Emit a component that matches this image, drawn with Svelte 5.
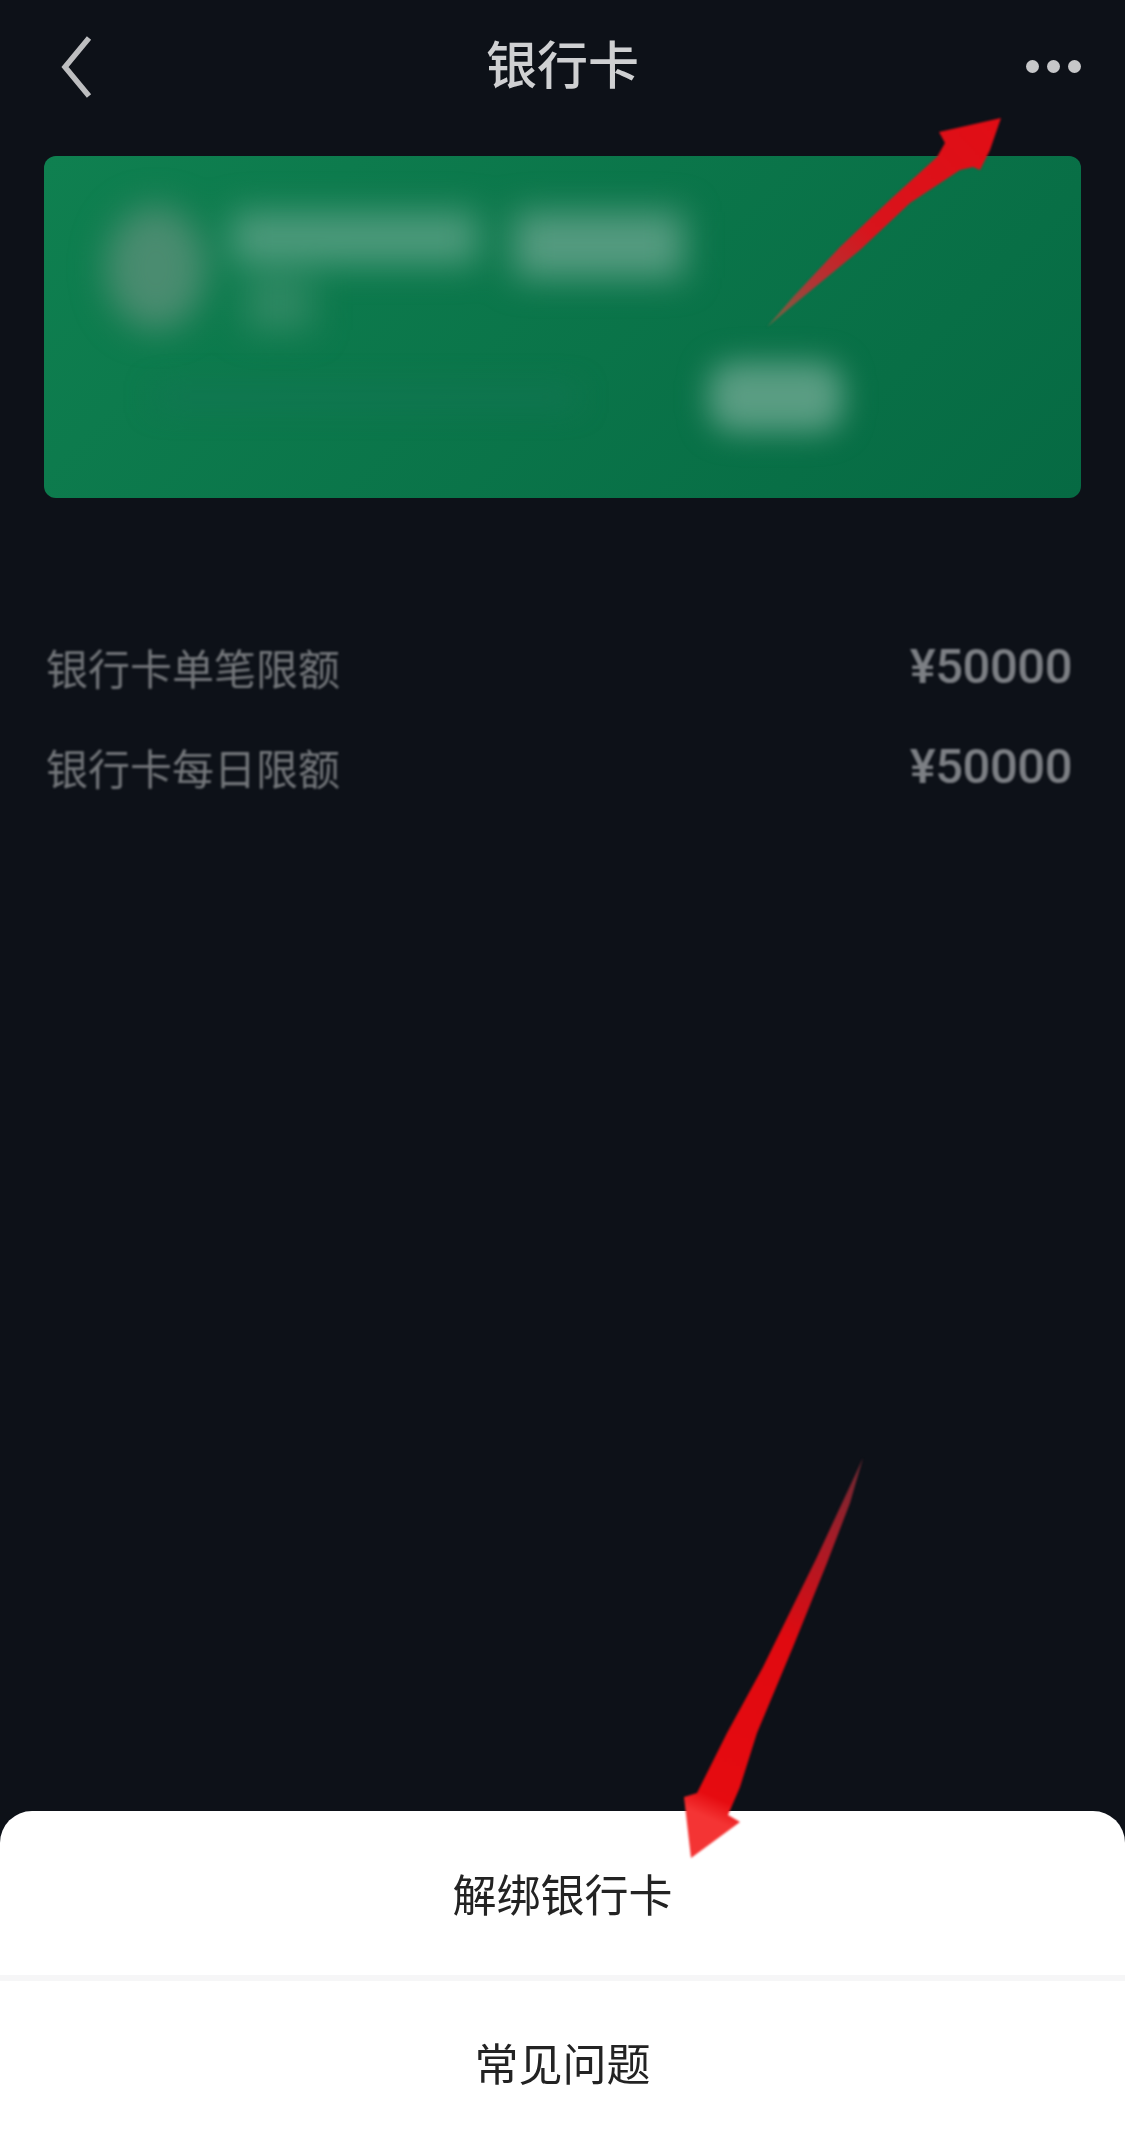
<script>
  const limits = [
    { label: "银行卡单笔限额", value: "¥50000" },
    { label: "银行卡每日限额", value: "¥50000" },
  ];
</script>

<div class="page">
  <header class="nav">
    <svg class="back" viewBox="0 0 40 64" width="40" height="64" aria-hidden="true">
      <path d="M32 3 L8 32 L32 61" fill="none" stroke="#bdbec0" stroke-width="5.5" />
    </svg>
    <h1>银行卡</h1>
    <div class="more" aria-hidden="true"><i></i><i></i><i></i></div>
  </header>

  <section class="card">
    <div class="card-top">
      <div class="logo"></div>
      <div class="name">
        <div class="name-row"><span class="bar one"></span><span class="bar two"></span></div>
        <span class="bar sub"></span>
      </div>
    </div>
    <div class="card-bottom">
      <span class="faint"></span>
      <span class="blob"></span>
    </div>
  </section>

  <section class="limits">
    {#each limits as row}
      <div class="row">
        <span>{row.label}</span>
        <span class="value">{row.value}</span>
      </div>
    {/each}
  </section>

  <section class="sheet">
    <div class="action first">解绑银行卡</div>
    <div class="action second">常见问题</div>
  </section>

  <!-- red annotation arrows drawn on top of the screenshot -->
  <svg class="arrows" viewBox="0 0 1125 2143" width="1125" height="2143" aria-hidden="true">
    <defs>
      <linearGradient id="up" x1="767" y1="327" x2="1001" y2="118" gradientUnits="userSpaceOnUse">
        <stop offset="0" stop-color="#6a6a45" />
        <stop offset="0.2" stop-color="#b03535" />
        <stop offset="0.45" stop-color="#d8141c" />
        <stop offset="1" stop-color="#e20d15" />
      </linearGradient>
      <linearGradient id="down" x1="863" y1="1458" x2="691" y2="1858" gradientUnits="userSpaceOnUse">
        <stop offset="0" stop-color="#6b2a33" />
        <stop offset="0.2" stop-color="#a51c28" />
        <stop offset="0.45" stop-color="#e00a10" />
        <stop offset="0.85" stop-color="#e60b10" />
        <stop offset="0.9" stop-color="#f43434" />
        <stop offset="1" stop-color="#f43434" />
      </linearGradient>
    </defs>
    <polygon points="767,327 793,297 840,247 893,197 937,157 945,143 939,132 1001,118 990,150 980,170 973,167 960,170 910,203 860,250 803,297" fill="url(#up)" />
    <polygon points="863,1458 850,1503 827,1563 793,1647 757,1733 740,1787 728,1815 740,1822 691,1858 684,1797 697,1793 727,1733 763,1667 817,1557" fill="url(#down)" />
  </svg>
</div>

<style>
  :global(body) {
    margin: 0;
    background: #0d1118;
  }

  .page {
    position: relative;
    display: flex;
    flex-direction: column;
    width: 1125px;
    height: 2143px;
    overflow: hidden;
    background: #0d1118;
    font-family: "Noto Sans CJK SC", "Liberation Sans", sans-serif;
  }

  .nav {
    display: flex;
    align-items: center;
    justify-content: center;
    position: relative;
    height: 124px;
    margin-bottom: 32px;
  }

  .back {
    position: absolute;
    left: 57px;
    top: 35px;
  }

  h1 {
    margin: 0;
    font-size: 51px;
    font-weight: 500;
    color: #cfd0d2;
    filter: blur(0.7px);
  }

  .more {
    position: absolute;
    right: 44px;
    top: 60px;
    display: flex;
    gap: 8px;
  }

  .more i {
    width: 13px;
    height: 13px;
    border-radius: 50%;
    background: #c6c7c9;
  }

  .card {
    display: flex;
    flex-direction: column;
    height: 342px;
    margin: 0 44px;
    padding: 50px 0 0 62px;
    box-sizing: border-box;
    border-radius: 12px;
    background: linear-gradient(135deg, #0f8050, #066a43);
    overflow: hidden;
  }

  .card-top {
    display: flex;
    gap: 26px;
    height: 134px;
    filter: blur(17px);
  }

  .logo {
    width: 100px;
    height: 124px;
    border-radius: 50%;
    background: #4a8c70;
  }

  .name-row {
    display: flex;
    gap: 36px;
    margin-top: 6px;
  }

  .bar {
    display: block;
    background: #4e9a7c;
  }

  .bar.one {
    width: 246px;
    height: 52px;
  }

  .bar.two {
    width: 170px;
    height: 66px;
    background: #559b80;
  }

  .bar.sub {
    width: 66px;
    height: 52px;
    margin: 0 0 0 14px;
    background: #2f8863;
  }

  .card-bottom {
    display: flex;
    justify-content: space-between;
    align-items: center;
    margin-top: 22px;
    padding-right: 238px;
    filter: blur(15px);
  }

  .faint {
    width: 420px;
    height: 16px;
    margin-left: 50px;
    background: #137553;
  }

  .blob {
    width: 134px;
    height: 70px;
    border-radius: 24px;
    background: #5a9d83;
  }

  .limits {
    margin-top: 118px;
    padding: 0 53px 0 46px;
  }

  .row {
    display: flex;
    justify-content: space-between;
    align-items: center;
    height: 100px;
    font-size: 42px;
    color: #74777b;
    filter: blur(0.8px);
  }

  .value {
    font-family: Roboto, "Liberation Sans", sans-serif;
    font-size: 49px;
    font-weight: 500;
    letter-spacing: -0.5px;
    color: #7c7f84;
  }

  .sheet {
    margin-top: auto;
    height: 332px;
    border-radius: 32px 32px 0 0;
    background: #fff;
    color: #232323;
    font-size: 44px;
    text-align: center;
  }

  .action {
    display: flex;
    align-items: center;
    justify-content: center;
    box-sizing: border-box;
    filter: blur(0.6px);
  }

  .first {
    height: 170px;
    border-bottom: 6px solid #f6f6f7;
  }

  .second {
    height: 162px;
  }

  .arrows {
    position: absolute;
    left: 0;
    top: 0;
    pointer-events: none;
    filter: blur(0.8px);
  }
</style>
